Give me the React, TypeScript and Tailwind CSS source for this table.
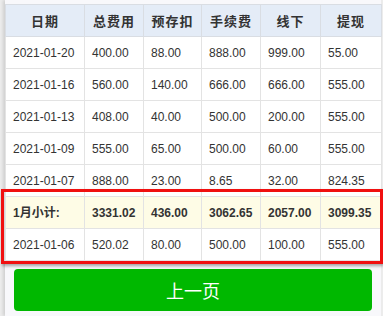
const rows = [
  ["2021-01-20", "400.00", "88.00", "888.00", "999.00", "55.00"],
  ["2021-01-16", "560.00", "140.00", "666.00", "666.00", "555.00"],
  ["2021-01-13", "408.00", "40.00", "500.00", "200.00", "555.00"],
  ["2021-01-09", "555.00", "65.00", "500.00", "60.00", "555.00"],
  ["2021-01-07", "888.00", "23.00", "8.65", "32.00", "824.35"],
];

const subtotal = ["1月小计:", "3331.02", "436.00", "3062.65", "2057.00", "3099.35"];
const lastRow = ["2021-01-06", "520.02", "80.00", "500.00", "100.00", "555.00"];

const headers = ["日期", "总费用", "预存扣", "手续费", "线下", "提现"];
const widths = ["w-[79px]", "w-[59px]", "w-[58px]", "w-[59px]", "w-[60px]", "w-[61px]"];

export default function App() {
  return (
    <div className="relative w-[383px] h-[316px] overflow-hidden bg-[#ececec] font-['Liberation_Sans','Noto_Sans_CJK_SC',sans-serif] text-[#333]">
      <div className="ml-[5px] w-[376px] h-full bg-[#f8f8fb] pt-[4px] shadow-[-2px_0_3px_rgba(0,0,0,0.12)]">
        <table className="w-[376px] table-fixed border-collapse bg-white text-[12px]">
          <colgroup>
            {widths.map((w) => (
              <col key={w} className={w} />
            ))}
          </colgroup>
          <thead>
            <tr className="bg-[#e4ecf7]">
              {headers.map((h) => (
                <th
                  key={h}
                  className="h-[32px] border border-[#d9dde3] text-center text-[13px] font-bold tracking-[1px] font-['Noto_Sans_CJK_SC',sans-serif]"
                >
                  {h}
                </th>
              ))}
            </tr>
          </thead>
          <tbody>
            {rows.map((r) => (
              <tr key={r[0]}>
                {r.map((c, i) => (
                  <td key={i} className="h-[32px] border border-[#e3e3e3] pl-[7px]">
                    {c}
                  </td>
                ))}
              </tr>
            ))}
            <tr className="bg-[#fefce6] font-bold">
              {subtotal.map((c, i) => (
                <td key={i} className="h-[32px] border border-[#e3e3e3] pl-[7px]">
                  {c}
                </td>
              ))}
            </tr>
            <tr>
              {lastRow.map((c, i) => (
                <td key={i} className="h-[32px] border border-[#e3e3e3] pl-[7px]">
                  {c}
                </td>
              ))}
            </tr>
          </tbody>
        </table>
        <button className="mx-[9px] mt-[8px] flex h-[42px] w-[358px] items-center justify-center rounded-[4px] bg-[#00b800] text-[18px] text-white font-['Noto_Sans_CJK_SC',sans-serif]">
          上一页
        </button>
      </div>
      {/* highlight annotation */}
      <div className="absolute left-[1px] top-[189px] h-[75px] w-[382px] border-[3px] border-[#f01010] shadow-[1px_2px_3px_rgba(0,0,0,0.35)]" />
    </div>
  );
}
